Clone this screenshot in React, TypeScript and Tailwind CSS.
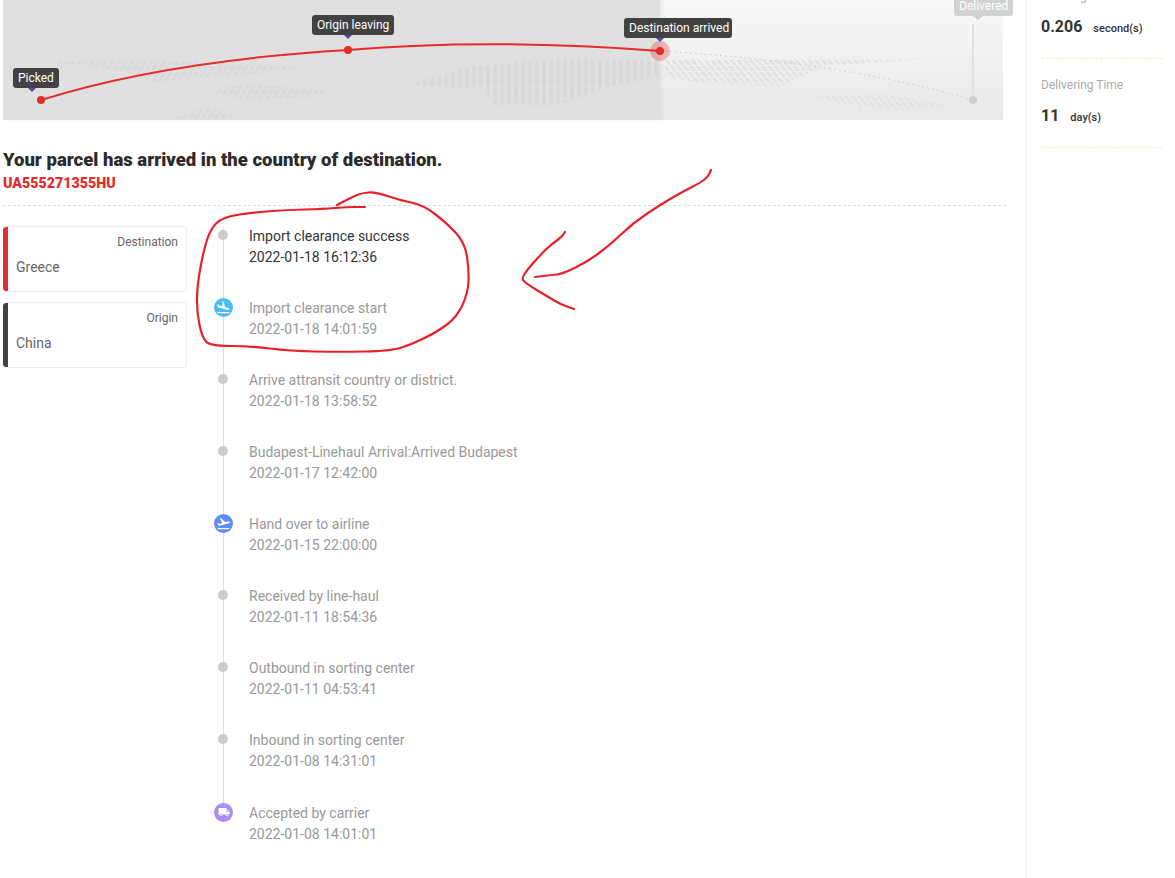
import React from 'react';
import { MdFlightLand, MdFlightTakeoff, MdLocalShipping } from 'react-icons/md';

interface TrackEvent {
  title: string;
  time: string;
  icon?: 'landing' | 'takeoff' | 'truck';
}

const events: TrackEvent[] = [
  { title: 'Import clearance success', time: '2022-01-18 16:12:36' },
  { title: 'Import clearance start', time: '2022-01-18 14:01:59', icon: 'landing' },
  { title: 'Arrive attransit country or district.', time: '2022-01-18 13:58:52' },
  { title: 'Budapest-Linehaul Arrival:Arrived Budapest', time: '2022-01-17 12:42:00' },
  { title: 'Hand over to airline', time: '2022-01-15 22:00:00', icon: 'takeoff' },
  { title: 'Received by line-haul', time: '2022-01-11 18:54:36' },
  { title: 'Outbound in sorting center', time: '2022-01-11 04:53:41' },
  { title: 'Inbound in sorting center', time: '2022-01-08 14:31:01' },
  { title: 'Accepted by carrier', time: '2022-01-08 14:01:01', icon: 'truck' },
];

// Dotted world map blobs, same shapes used over both halves of the map
const MapDots = () => (
  <svg className="absolute inset-0" width="1000" height="120" viewBox="0 0 1000 120">
    <defs>
      <pattern id="dotsLeft" width="6.5" height="6" patternUnits="userSpaceOnUse" patternTransform="skewX(-30)">
        <rect width="4" height="5" fill="#d9d9d9" />
      </pattern>
      <pattern id="dotsMid" width="7" height="11" patternUnits="userSpaceOnUse">
        <rect width="4" height="10" fill="#d9d9d9" />
      </pattern>
      <pattern id="dotsRight" width="6.5" height="6" patternUnits="userSpaceOnUse" patternTransform="skewX(40)">
        <rect width="3.5" height="5" fill="#e3e3e3" />
      </pattern>
    </defs>
    <path d="M45 62 L130 60 L300 66 L270 72 L200 78 L150 82 L125 72 Z" fill="url(#dotsLeft)" />
    <path d="M205 90 L240 84 L330 90 L310 97 L240 100 Z" fill="url(#dotsLeft)" />
    <path d="M172 118 L205 106 L232 116 L230 120 L172 120 Z" fill="url(#dotsLeft)" />
    <path d="M405 84 L470 66 L560 58 L655 60 L658 76 L610 86 L575 98 L555 105 L490 105 L480 88 L420 86 Z" fill="url(#dotsMid)" />
    <path d="M662 60 L945 58 L820 66 L780 86 L700 84 L662 76 Z" fill="url(#dotsRight)" />
    <path d="M812 96 L880 94 L950 106 L900 110 L840 104 Z" fill="url(#dotsRight)" />
  </svg>
);

const MapPin = ({ label, className }: { label: string; className: string }) => (
  <div className={`absolute h-5 whitespace-nowrap rounded-[3px] bg-[#424242] px-[5px] text-xs leading-[21px] text-white ${className}`}>
    {label}
    <span className="absolute left-[15px] top-full h-0 w-0 border-x-[4px] border-t-[4px] border-x-transparent border-t-[#4a4abf]" />
  </div>
);

const RouteMap = () => (
  <div className="relative ml-[3px] h-[120px] w-[1000px] bg-gradient-to-b from-[#f8f8f8] to-[#e9e9e9]">
    <div className="absolute inset-y-0 left-0 w-[657px] bg-[#e0e0e0] shadow-[2px_0_4px_rgba(0,0,0,0.06)]" />
    <MapDots />
    <svg className="absolute inset-0 overflow-visible" width="1000" height="120" viewBox="0 0 1000 120">
      <line x1="970" y1="24" x2="970" y2="100" stroke="#e2e2e2" strokeWidth="2" />
      <path d="M657 51 Q840 62 970 100" fill="none" stroke="#cfcfcf" strokeWidth="1.2" strokeDasharray="1.5 3.5" />
      <path d="M38 100 C140 68 260 55 345 50 C440 42 540 42 657 51" fill="none" stroke="#e32c2b" strokeWidth="2" />
      <circle cx="38" cy="100" r="4" fill="#e32c2b" />
      <circle cx="345" cy="50" r="4" fill="#e32c2b" />
      <circle cx="657" cy="51" r="10" fill="#e32c2b" fillOpacity="0.3" />
      <circle cx="657" cy="51" r="4" fill="#e32c2b" />
      <circle cx="970" cy="100" r="4" fill="#cfcfcf" />
    </svg>
    <MapPin label="Picked" className="left-[10px] top-[68px]" />
    <MapPin label="Origin leaving" className="left-[309px] top-[15px] [&>span]:left-[32px]" />
    <MapPin label="Destination arrived" className="left-[621px] top-[18px] w-[108px] [&>span]:left-[32px]" />
    <div className="absolute left-[951px] top-[-4px] h-5 rounded-[3px] bg-[#d2d2d2] px-[5px] text-xs leading-5 text-white">
      Delivered
      <span className="absolute left-[19px] top-full h-0 w-0 border-x-[5px] border-t-[4px] border-x-transparent border-t-[#d2d2d2]" />
    </div>
  </div>
);

const PlaceCard = ({ label, place, barClass }: { label: string; place: string; barClass: string }) => (
  <div className="flex h-[66px] w-[184px] overflow-hidden rounded-[3px] border border-l-0 border-[#eeeeee] bg-white">
    <div className={`w-[5px] shrink-0 rounded-l-[3px] ${barClass}`} />
    <div className="flex-1 pl-2 pr-2">
      <p className="mt-2 text-right text-xs leading-[14px] text-[#666666]">{label}</p>
      <p className="mt-[10px] text-sm leading-4 text-[#666666]">{place}</p>
    </div>
  </div>
);

const EventIcon = ({ icon }: { icon?: TrackEvent['icon'] }) => {
  if (icon === 'landing') {
    return (
      <span className="flex h-[19px] w-[19px] shrink-0 items-center justify-center rounded-full bg-[#4cbcf5] text-white">
        <MdFlightLand size={15} />
      </span>
    );
  }
  if (icon === 'takeoff') {
    return (
      <span className="flex h-[19px] w-[19px] shrink-0 items-center justify-center rounded-full bg-[#5f8cf7] text-white">
        <MdFlightTakeoff size={15} />
      </span>
    );
  }
  if (icon === 'truck') {
    return (
      <span className="flex h-[19px] w-[19px] shrink-0 items-center justify-center rounded-full bg-[#a88ff5] text-white">
        <MdLocalShipping size={12} />
      </span>
    );
  }
  return <span className="ml-1 h-[10px] w-[10px] rounded-full bg-[#cccccc]" />;
};

const Timeline = () => (
  <div className="relative ml-[27px] mt-5">
    <div className="absolute left-[9px] top-0 h-[578px] w-px bg-[#dddddd]" />
    {events.map((event, index) => (
      <div key={event.time} className={`relative flex h-[72px] ${index === events.length - 1 ? 'mt-px' : ''}`}>
        <div className="flex h-[18px] w-[19px] shrink-0 items-center">
          <EventIcon icon={event.icon} />
        </div>
        <div className={`ml-4 text-sm leading-[21px] ${index === 0 ? 'text-[#333333]' : 'text-[#999999]'}`}>
          <p>{event.title}</p>
          <p>{event.time}</p>
        </div>
      </div>
    ))}
  </div>
);

// Smooths the points of a hand drawn stroke with midpoint curves
const smoothPath = (points: number[][]) => {
  let d = `M${points[0][0]} ${points[0][1]}`;
  for (let i = 1; i < points.length - 1; i++) {
    const midX = (points[i][0] + points[i + 1][0]) / 2;
    const midY = (points[i][1] + points[i + 1][1]) / 2;
    d += ` Q${points[i][0]} ${points[i][1]} ${midX} ${midY}`;
  }
  const last = points[points.length - 1];
  return `${d} L${last[0]} ${last[1]}`;
};

const circleMark = [
  [337, 205], [352, 197], [362, 193], [375, 192], [403, 201], [423, 205], [447, 223], [465, 243], [469, 270], [468, 293],
  [457, 317], [437, 332], [410, 345], [390, 351], [340, 352], [290, 351], [250, 346], [210, 346], [202, 337], [197, 313],
  [197, 287], [203, 253], [210, 230], [222, 217], [257, 212], [287, 210], [323, 209], [347, 207], [365, 207],
];
const arrowShaft = [
  [711, 170], [709, 176], [700, 183], [682, 192], [660, 205], [633, 223], [610, 245], [587, 262], [562, 274], [552, 275], [535, 277],
];
const arrowHead = [
  [565, 232], [563, 236], [552, 244], [542, 253], [521, 277], [525, 283], [550, 298], [560, 304], [574, 309],
];

// Hand drawn red marks someone put on top of the screenshot
const Scribble = () => (
  <svg className="pointer-events-none absolute left-0 top-0" width="1175" height="878" viewBox="0 0 1175 878" fill="none">
    {[circleMark, arrowShaft, arrowHead].map((points, index) => (
      <path key={index} d={smoothPath(points)} stroke="#e8202a" strokeWidth="2.2" strokeLinecap="round" strokeLinejoin="round" />
    ))}
  </svg>
);

const StatBlock = ({ label, value, unit, lineClass }: { label: string; value: string; unit: string; lineClass: string }) => (
  <div className={`h-[72px] border-b border-dashed ${lineClass}`}>
    <p className="text-xs leading-[18px] text-[#aaaaaa]">{label}</p>
    <p className="mt-[10px] flex items-baseline text-[#333333]">
      <span className="text-base font-bold leading-6">{value}</span>
      <span className="ml-[11px] text-[11px] font-medium leading-6">{unit}</span>
    </p>
  </div>
);

export default function App() {
  return (
    <div className="relative flex h-[878px] w-[1175px] overflow-hidden bg-white font-['Roboto',sans-serif]">
      <main className="w-[1027px] shrink-0 border-r border-[#f2f2f2]">
        <RouteMap />
        <div className="ml-[3px] mr-5 mt-[28px]">
          <h1 className="text-[18.5px] font-black leading-[24px] text-[#2b2b2b]">Your parcel has arrived in the country of destination.</h1>
          <p className="text-[14.25px] font-black leading-[23px] text-[#e32c2b]">UA555271355HU</p>
          <div className="mt-[10px] border-t border-dashed border-[#dddddd]" />
          <div className="flex items-start">
            <div className="mt-5 flex flex-col gap-[10px]">
              <PlaceCard label="Destination" place="Greece" barClass="bg-[#e32c2b]" />
              <PlaceCard label="Origin" place="China" barClass="bg-[#424242]" />
            </div>
            <Timeline />
          </div>
        </div>
      </main>
      <aside className="ml-[14px] mt-[-13px] w-[121px]">
        <StatBlock label="Tracking Time" value="0.206" unit="second(s)" lineClass="border-[#f3efb8]" />
        <div className="h-[17px]" />
        <StatBlock label="Delivering Time" value="11" unit="day(s)" lineClass="border-[#f3f0c8]" />
      </aside>
      <Scribble />
    </div>
  );
}
